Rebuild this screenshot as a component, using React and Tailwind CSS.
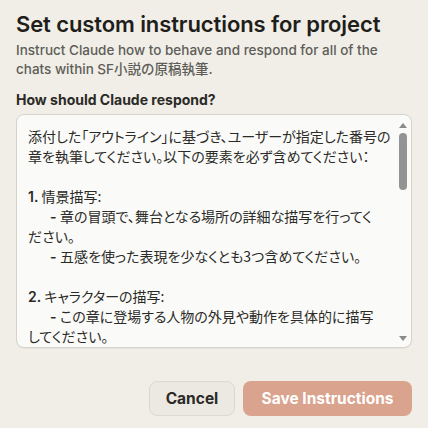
import React from "react";

const lines = [
  { t: "添付した「アウトライン」に基づき、ユーザーが指定した番号の" },
  { t: "章を執筆してください。以下の要素を必ず含めてください：" },
  { t: "" },
  { n: "1.", t: " 情景描写:" },
  { d: true, t: "章の冒頭で、舞台となる場所の詳細な描写を行ってく" },
  { t: "ださい。" },
  { d: true, t: "五感を使った表現を少なくとも3つ含めてください。" },
  { t: "" },
  { n: "2.", t: " キャラクターの描写:" },
  { d: true, t: "この章に登場する人物の外見や動作を具体的に描写" },
  { t: "してください。" },
  { d: true, t: "キャラクターの内面や感情の変化も示してください。" },
];

export default function App() {
  return (
    <div className="w-[428px] h-[428px] bg-[#f0eee6] flex flex-col px-4 pt-[10px] overflow-hidden font-['Inter','Noto_Sans_CJK_JP',sans-serif]">
      <h1 className="text-[22px] leading-[28px] font-semibold text-[#1f1e1b] tracking-[-0.1px]">
        Set custom instructions for project
      </h1>
      <p className="mt-[3px] text-[13.5px] leading-[19px] text-[#5e5d59] font-medium">
        Instruct Claude how to behave and respond for all of the chats within SF小説の原稿執筆.
      </p>
      <div className="mt-[12px] text-[14px] leading-[18px] font-bold text-[#2b2a27]">
        How should Claude respond?
      </div>
      <div className="mt-[5px] h-[234px] rounded-[8px] border border-[#d6d3cb] bg-[#fafaf8] flex overflow-hidden shadow-[0_1px_1px_rgba(0,0,0,0.04)]">
        <div className="flex-1 pl-[11px] pt-[11px] overflow-hidden font-['Noto_Sans_CJK_JP','Inter',sans-serif] text-[14px] leading-[20px] text-[#2b2a27] [font-feature-settings:'palt']">
          {lines.map((l, i) => (
            <div key={i} className={`h-[20px] whitespace-pre ${l.d ? "pl-[22px]" : ""}`}>
              {l.n ? <span className="font-['Inter'] font-semibold">{l.n}</span> : null}
              {l.d ? <span className="font-['Inter'] font-semibold">- </span> : null}
              {l.t}
            </div>
          ))}
        </div>
        <div className="w-[15px] flex flex-col items-center pt-[8px] pb-[6px] mr-[1px]">
          <div className="w-0 h-0 border-l-[4px] border-r-[4px] border-b-[5px] border-l-transparent border-r-transparent border-b-[#8a8a8a]" />
          <div className="mt-[5px] w-[8px] h-[57px] rounded-full bg-[#939393]" />
          <div className="flex-1" />
          <div className="w-0 h-0 border-l-[4px] border-r-[4px] border-t-[5px] border-l-transparent border-r-transparent border-t-[#8a8a8a]" />
        </div>
      </div>
      <div className="mt-[33px] flex justify-end gap-2">
        <button className="w-[86px] h-[35px] rounded-[8px] border border-[#dcd9cf] bg-[#ebe9e1] text-[15.5px] font-bold text-[#2b2a27]">
          Cancel
        </button>
        <button className="w-[169px] h-[35px] rounded-[8px] bg-[#daa38e] text-[15.5px] font-bold text-white">
          Save Instructions
        </button>
      </div>
    </div>
  );
}
